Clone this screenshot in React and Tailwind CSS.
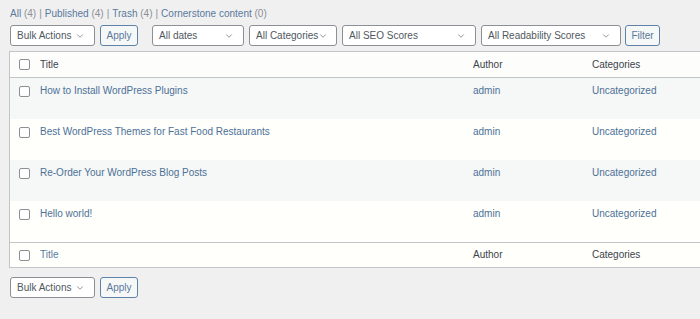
import { ChevronDown } from 'lucide-react'

const font = { fontFamily: '"Segoe UI", "Liberation Sans", Arial, sans-serif' }

function Select({ label, w }) {
  return (
    <div
      className={`flex items-center justify-between h-[21px] pl-[6px] pr-[9px] bg-white border border-[#8c8f94] rounded-[3px] text-[10px] text-[#50575e] ${w}`}
    >
      <span className="whitespace-nowrap">{label}</span>
      <ChevronDown className="w-[10px] h-[10px] text-[#50575e] shrink-0" strokeWidth={1.5} />
    </div>
  )
}

function Button({ label, w }) {
  return (
    <div
      className={`flex items-center justify-center h-[21px] bg-[#f6f7f7] border border-[#5f83a8] rounded-[3px] text-[10px] text-[#5a7a9c] ${w}`}
    >
      {label}
    </div>
  )
}

function Check() {
  return <span className="block w-[11px] h-[11px] border border-[#8c8f94] rounded-[2px] bg-white" />
}

const posts = [
  'How to Install WordPress Plugins',
  'Best WordPress Themes for Fast Food Restaurants',
  'Re-Order Your WordPress Blog Posts',
  'Hello world!',
]

export default function App() {
  return (
    <div className="w-[700px] h-[319px] overflow-hidden bg-[#f0f0f1] text-[10px] leading-[14px]" style={font}>
      {/* ── Status links ── */}
      <div className="pl-[10px] pt-[7px] h-[25px] text-[#8c8f94]">
        <span className="text-[#5a7a9c]">All <span className="text-[#8c8f94]">(4)</span></span>
        <span className="mx-[3px]">|</span>
        <span className="text-[#5a7a9c]">Published <span className="text-[#8c8f94]">(4)</span></span>
        <span className="mx-[3px]">|</span>
        <span className="text-[#5a7a9c]">Trash <span className="text-[#8c8f94]">(4)</span></span>
        <span className="mx-[3px]">|</span>
        <span className="text-[#5a7a9c]">Cornerstone content <span className="text-[#8c8f94]">(0)</span></span>
      </div>

      {/* ── Top toolbar ── */}
      <div className="flex items-center pl-[10px] h-[21px]">
        <Select label="Bulk Actions" w="w-[85px]" />
        <div className="w-[5px]" />
        <Button label="Apply" w="w-[38px]" />
        <div className="w-[14px]" />
        <Select label="All dates" w="w-[92px]" />
        <div className="w-[5px]" />
        <Select label="All Categories" w="w-[88px]" />
        <div className="w-[5px]" />
        <Select label="All SEO Scores" w="w-[134px]" />
        <div className="w-[5px]" />
        <Select label="All Readability Scores" w="w-[140px]" />
        <div className="w-[4px]" />
        <Button label="Filter" w="w-[35px]" />
      </div>

      {/* ── Posts table ── */}
      <div className="ml-[9px] mt-[5px] w-[720px] border border-[#c3c4c7] bg-white text-[#3c434a]">
        <div className="flex items-center h-[26px] border-b border-[#c3c4c7] bg-[#fdfdfc]">
          <div className="w-[30px] pl-[9px]"><Check /></div>
          <div className="w-[433px]">Title</div>
          <div className="w-[119px]">Author</div>
          <div>Categories</div>
        </div>
        {posts.map((title, i) => (
          <div key={title} className={`flex items-start h-[41px] pt-[6px] ${i % 2 === 0 ? 'bg-[#f6f7f7]' : 'bg-[#fffffc]'}`}>
            <div className="w-[30px] pl-[9px] pt-[2px]"><Check /></div>
            <div className="w-[433px] text-[#4d7196]">{title}</div>
            <div className="w-[119px] text-[#4d7196]">admin</div>
            <div className="text-[#4d7196]">Uncategorized</div>
          </div>
        ))}
        <div className="flex items-center h-[25px] border-t border-[#c3c4c7] bg-[#fffffc]">
          <div className="w-[30px] pl-[9px]"><Check /></div>
          <div className="w-[433px] text-[#5a7a9c]">Title</div>
          <div className="w-[119px]">Author</div>
          <div>Categories</div>
        </div>
      </div>

      {/* ── Bottom toolbar ── */}
      <div className="flex items-center pl-[10px] mt-[9px]">
        <Select label="Bulk Actions" w="w-[85px]" />
        <div className="w-[5px]" />
        <Button label="Apply" w="w-[38px]" />
      </div>
    </div>
  )
}
